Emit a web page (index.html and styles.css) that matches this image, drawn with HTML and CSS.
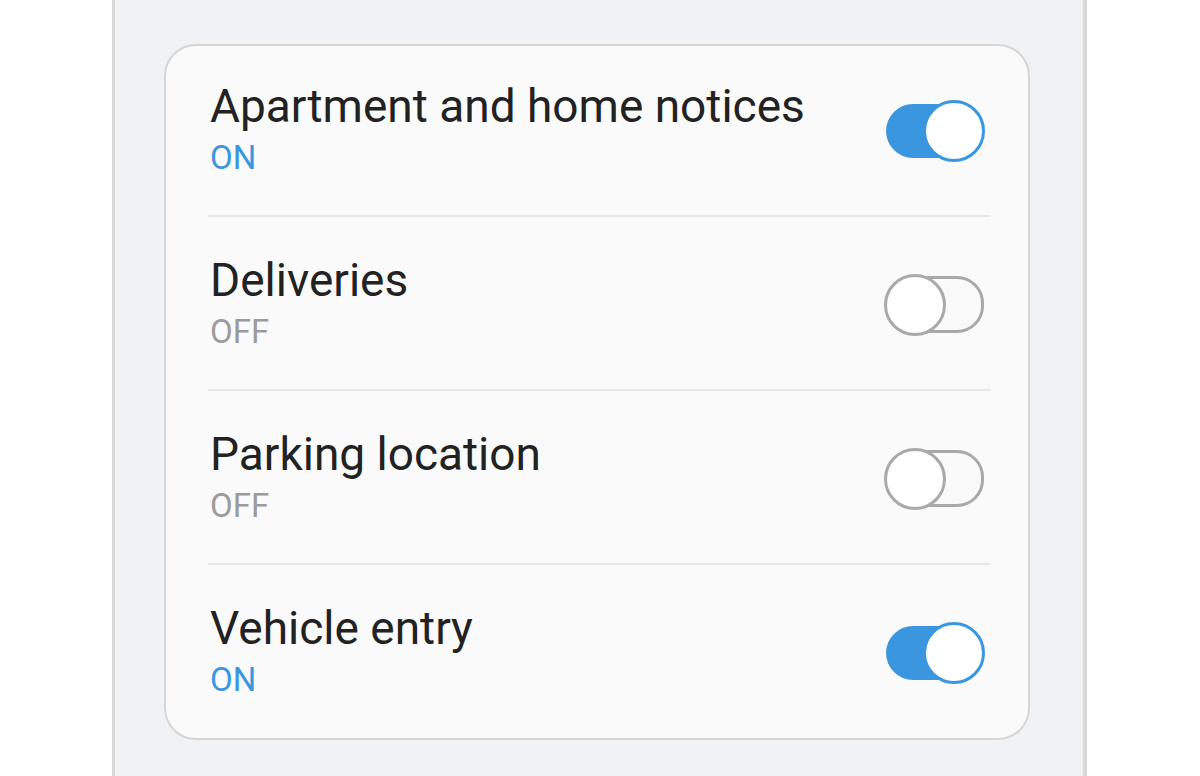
FILE: index.html
```html
<!DOCTYPE html>
<html>
<head>
<meta charset="utf-8">
<link rel="stylesheet" href="styles.css">
</head>
<body>
<div class="screen">
  <div class="card">
    <div class="row">
      <div class="texts">
        <div class="title">Apartment and home notices</div>
        <div class="state on">ON</div>
      </div>
      <div class="switch switch-on"><span class="thumb"></span></div>
    </div>
    <div class="row">
      <div class="texts">
        <div class="title">Deliveries</div>
        <div class="state off">OFF</div>
      </div>
      <div class="switch switch-off"><span class="thumb"></span></div>
    </div>
    <div class="row">
      <div class="texts">
        <div class="title">Parking location</div>
        <div class="state off">OFF</div>
      </div>
      <div class="switch switch-off"><span class="thumb"></span></div>
    </div>
    <div class="row last">
      <div class="texts">
        <div class="title">Vehicle entry</div>
        <div class="state on">ON</div>
      </div>
      <div class="switch switch-on"><span class="thumb"></span></div>
    </div>
  </div>
</div>
</body>
</html>
```
FILE: styles.css
```css
html, body {
  margin: 0;
  padding: 0;
  background: #ffffff;
  height: 776px;
  overflow: hidden;
  font-family: Roboto, "Noto Sans", sans-serif;
}
.screen {
  box-sizing: border-box;
  margin-left: 112px;
  width: 975px;
  height: 776px;
  background: #eff3f6;
  border-left: 3px solid #d9d9d9;
  border-right: 4px solid #d9d9d9;
  padding-top: 44px;
}
.card {
  box-sizing: border-box;
  margin-left: 49px;
  width: 866px;
  background: #fafafa;
  border: 2px solid #d6d6d6;
  border-radius: 32px;
  padding: 0 38px 0 42px;
}
.row {
  display: flex;
  align-items: center;
  justify-content: space-between;
  padding: 36px 0 37px;
  border-bottom: 2px solid #e6e6e6;
}
.row:first-child {
  padding-top: 33px;
}
.row.last {
  border-bottom: none;
  padding-bottom: 38px;
}
.texts {
  display: flex;
  flex-direction: column;
  gap: 5px;
  padding-left: 2px;
}
.title {
  font-size: 46px;
  line-height: 54px;
  color: #222222;
}
.state {
  font-size: 33px;
  line-height: 40px;
}
.state.on { color: #3a96de; }
.state.off { color: #9b9b9b; }
.switch {
  position: relative;
  box-sizing: border-box;
  width: 98px;
  height: 54px;
  border-radius: 27px;
  margin-right: 6px;
  margin-top: 4px;
}
.switch-on {
  background: #3a96de;
}
.switch-off {
  border: 3px solid #a9a9a9;
  height: 57px;
}
.thumb {
  position: absolute;
  box-sizing: border-box;
  width: 62px;
  height: 62px;
  border-radius: 50%;
  background: #ffffff;
  top: 50%;
  margin-top: -31px;
}
.switch-on .thumb {
  right: -1px;
  border: 3px solid #3a96de;
}
.switch-off .thumb {
  left: -5px;
  border: 3px solid #a9a9a9;
}
```
